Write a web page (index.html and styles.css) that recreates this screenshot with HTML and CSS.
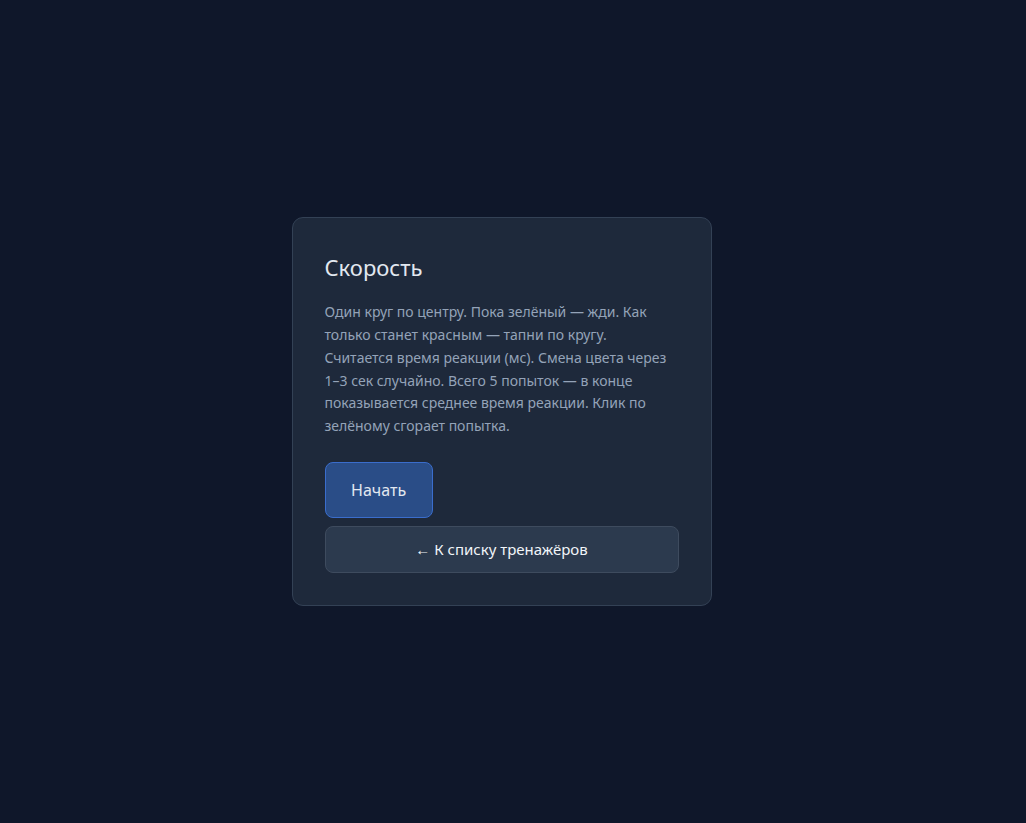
FILE: index.html
```html
<!DOCTYPE html>
<html lang="ru">
<head>
<meta charset="utf-8">
<title>Скорость</title>
<link rel="stylesheet" href="styles.css">
</head>
<body>
<main class="page">
  <section class="card">
    <h1 class="title">Скорость</h1>
    <p class="desc">Один круг по центру. Пока зелёный — жди. Как только станет красным — тапни по кругу. Считается время реакции (мс). Смена цвета через 1–3 сек случайно. Всего 5 попыток — в конце показывается среднее время реакции. Клик по зелёному сгорает попытка.</p>
    <div class="actions">
      <button class="btn btn-primary">Начать</button>
      <button class="btn btn-back">← К списку тренажёров</button>
    </div>
  </section>
</main>
</body>
</html>
```
FILE: styles.css
```css
* { box-sizing: border-box; }
html, body { margin: 0; padding: 0; }
body {
  background: #0f172a;
  font-family: "Noto Sans", "Open Sans", sans-serif;
  color: #e2e8f0;
}
.page {
  min-height: 823px;
  display: flex;
  align-items: center;
  justify-content: center;
  padding-right: 23px;
}
.card {
  width: 420px;
  background: #1e293b;
  border: 1px solid #334155;
  border-radius: 11px;
  padding: 32px;
}
.title {
  margin: 0 0 17px;
  font-size: 22px;
  font-weight: 400;
  line-height: 34px;
  color: #e2e8f0;
}
.desc {
  margin: 0 0 24px;
  font-size: 14px;
  line-height: 22.8px;
  color: #94a3b8;
}
.actions {
  display: flex;
  flex-direction: column;
  align-items: flex-start;
  gap: 8px;
}
.btn {
  font-family: inherit;
  cursor: pointer;
}
.btn-primary {
  height: 56px;
  padding: 0 25.5px;
  background: #2a4d87;
  border: 1px solid #3a6dcc;
  border-radius: 8px;
  color: #e2e8f0;
  font-size: 16px;
}
.btn-back {
  width: 100%;
  height: 47px;
  background: #2c3a4e;
  border: 1px solid #3e4b5e;
  border-radius: 8px;
  color: #f1f5f9;
  font-size: 15px;
}
```
